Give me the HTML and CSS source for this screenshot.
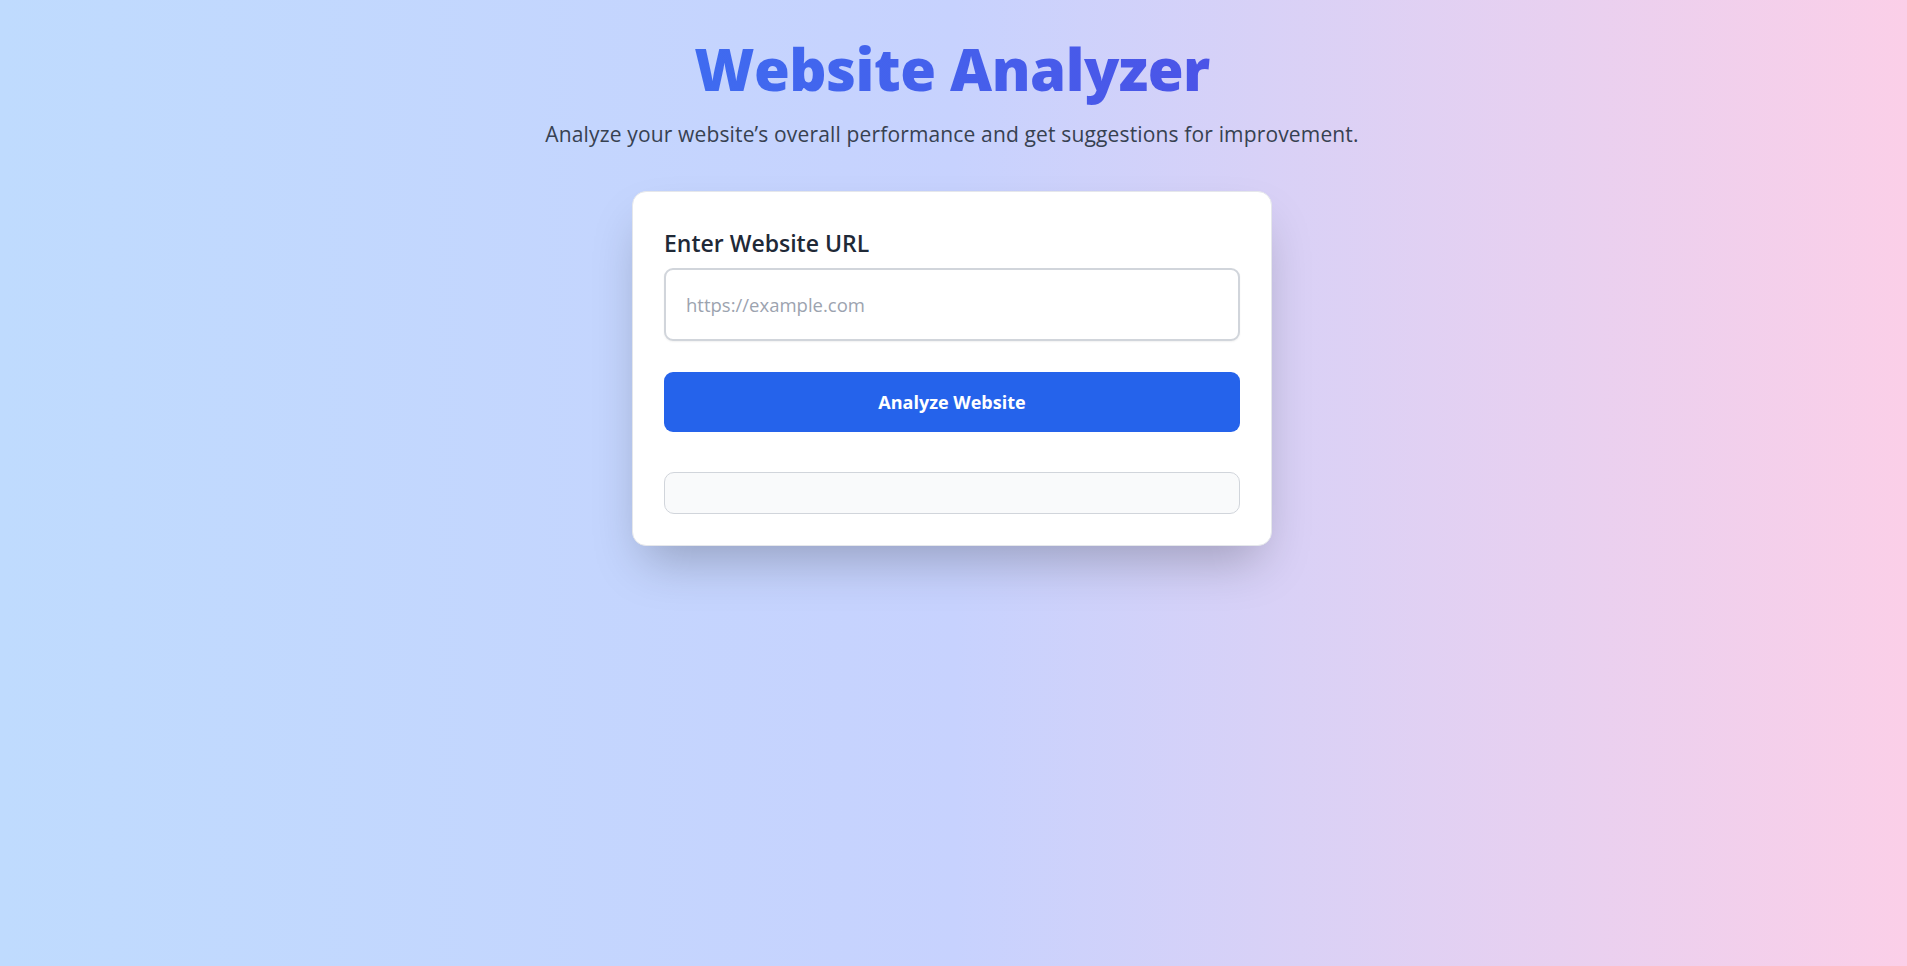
FILE: index.html
```html
<!DOCTYPE html>
<html lang="en">
<head>
<meta charset="utf-8">
<title>Website Analyzer</title>
<link rel="stylesheet" href="styles.css">
</head>
<body>
<main class="page">
  <header class="hero">
    <h1 class="title">Website Analyzer</h1>
    <p class="subtitle">Analyze your website’s overall performance and get suggestions for improvement.</p>
  </header>
  <section class="card">
    <label class="label" for="url">Enter Website URL</label>
    <input class="url-input" id="url" type="text" placeholder="https://example.com">
    <button class="analyze-btn" type="button">Analyze Website</button>
    <div class="result"></div>
  </section>
</main>
</body>
</html>
```

FILE: styles.css
```css
* { box-sizing: border-box; }
html, body { margin: 0; padding: 0; height: 100%; }
body {
  font-family: "Open Sans", "Noto Sans", sans-serif;
  background: linear-gradient(to right, #bfdbfe 0%, #c7d2fe 50%, #fbcfe8 100%);
  min-height: 100vh;
}
.page {
  display: flex;
  flex-direction: column;
  align-items: center;
  padding-top: 27px;
  padding-right: 3px;
}
.hero {
  display: flex;
  flex-direction: column;
  align-items: center;
}
.title {
  margin: 0;
  font-size: 58px;
  line-height: 84px;
  font-weight: 800;
  letter-spacing: -0.5px;
  background: linear-gradient(to right, #3f6bf0, #4b54e7);
  -webkit-background-clip: text;
  background-clip: text;
  color: transparent;
}
.subtitle {
  margin: 9px 0 0;
  font-size: 21px;
  line-height: 28px;
  letter-spacing: 0.15px;
  color: #374151;
}
.card {
  margin-top: 43px;
  width: 640px;
  background: #fff;
  border: 1px solid #e5e7eb;
  border-radius: 14px;
  padding: 35px 31px 31px;
  box-shadow: 0 25px 50px -12px rgba(0, 0, 0, 0.25);
  display: flex;
  flex-direction: column;
}
.label {
  font-size: 23px;
  line-height: 32px;
  font-weight: 600;
  color: #1f2937;
  margin-bottom: 9px;
}
.url-input {
  height: 73px;
  border: 2px solid #d1d5db;
  border-radius: 9px;
  padding: 0 20px;
  font-family: inherit;
  font-size: 18.5px;
  color: #111827;
  box-shadow: 0 1px 2px rgba(0, 0, 0, 0.06);
  outline: none;
}
.url-input::placeholder { color: #9ca3af; }
.analyze-btn {
  margin-top: 31px;
  height: 60px;
  border: none;
  border-radius: 9px;
  background: #2563eb;
  color: #fff;
  font-family: inherit;
  font-size: 18px;
  font-weight: 700;
  cursor: pointer;
}
.result {
  margin-top: 40px;
  height: 42px;
  background: #f9fafb;
  border: 1px solid #d1d5db;
  border-radius: 10px;
}
```
